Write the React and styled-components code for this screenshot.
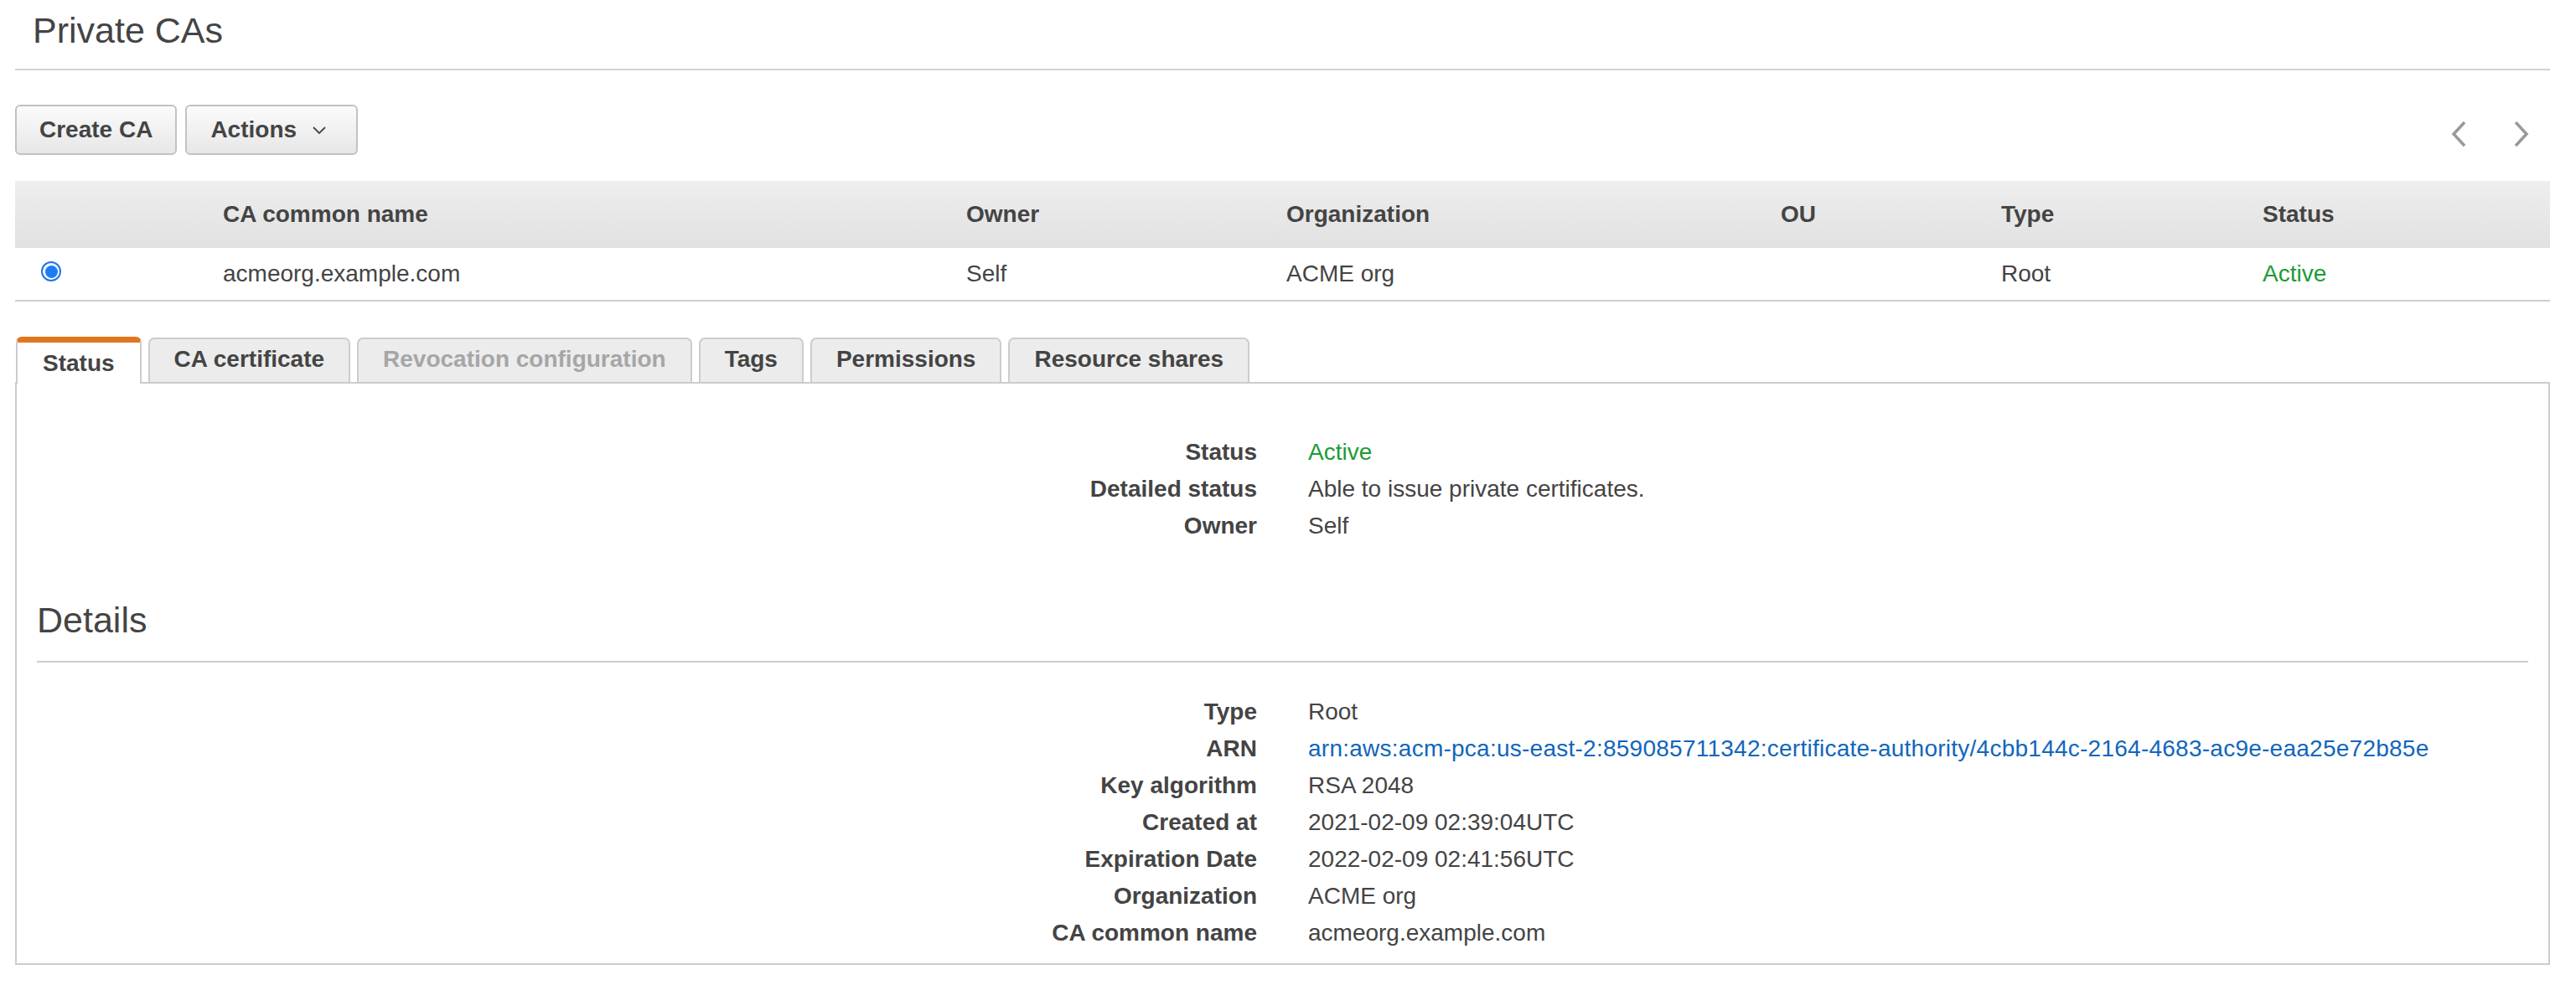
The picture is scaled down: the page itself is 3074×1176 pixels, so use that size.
import styled, { createGlobalStyle, css } from "styled-components"

const GlobalStyle = createGlobalStyle`
  html, body {
    margin: 0;
    padding: 0;
    background: #ffffff;
  }
  body {
    font-family: "Liberation Sans", Arial, Helvetica, sans-serif;
    color: #444444;
    overflow: hidden;
  }
`

const columns = [
  { key: "select", label: "", width: 232 },
  { key: "name", label: "CA common name", width: 887 },
  { key: "owner", label: "Owner", width: 382 },
  { key: "org", label: "Organization", width: 590 },
  { key: "ou", label: "OU", width: 263 },
  { key: "type", label: "Type", width: 312 },
  { key: "status", label: "Status", width: 359 },
]

const tabs = [
  { label: "Status", active: true },
  { label: "CA certificate" },
  { label: "Revocation configuration", disabled: true },
  { label: "Tags" },
  { label: "Permissions" },
  { label: "Resource shares" },
]

const arn =
  "arn:aws:acm-pca:us-east-2:859085711342:certificate-authority/4cbb144c-2164-4683-ac9e-eaa25e72b85e"

const details = [
  { label: "Type", value: "Root" },
  { label: "ARN", value: arn, tone: "link" },
  { label: "Key algorithm", value: "RSA 2048" },
  { label: "Created at", value: "2021-02-09 02:39:04UTC" },
  { label: "Expiration Date", value: "2022-02-09 02:41:56UTC" },
  { label: "Organization", value: "ACME org" },
  { label: "CA common name", value: "acmeorg.example.com" },
]

function Chevron({ dir }) {
  const d = dir === "left" ? "M16 2 L3 16 L16 30" : "M2 2 L15 16 L2 30"
  return (
    <svg width="18" height="32" viewBox="0 0 18 32">
      <path d={d} fill="none" stroke="#999999" strokeWidth="3.5" />
    </svg>
  )
}

export default function App() {
  return (
    <Page>
      <GlobalStyle />
      <TitleBar>
        <h1>Private CAs</h1>
      </TitleBar>

      <Toolbar>
        <ButtonGroup>
          <Button>Create CA</Button>
          <Button $menu>
            Actions
            <svg width="16" height="9" viewBox="0 0 16 9">
              <path d="M1 1 L8 8 L15 1" fill="none" stroke="#444444" strokeWidth="1.8" />
            </svg>
          </Button>
        </ButtonGroup>
        <Pager>
          <Chevron dir="left" />
          <Chevron dir="right" />
        </Pager>
      </Toolbar>

      <Table>
        <colgroup>
          {columns.map((c) => (
            <col key={c.key} style={{ width: c.width }} />
          ))}
        </colgroup>
        <thead>
          <tr>
            {columns.map((c) => (
              <Th key={c.key}>{c.label}</Th>
            ))}
          </tr>
        </thead>
        <tbody>
          <tr>
            <Td $pad={31}>
              <Radio />
            </Td>
            <Td>acmeorg.example.com</Td>
            <Td>Self</Td>
            <Td>ACME org</Td>
            <Td></Td>
            <Td>Root</Td>
            <Td $tone="ok">Active</Td>
          </tr>
        </tbody>
      </Table>

      <TabList>
        {tabs.map((t) => (
          <Tab key={t.label} $active={t.active} $disabled={t.disabled}>
            {t.label}
          </Tab>
        ))}
      </TabList>

      <Panel>
        <KeyValues>
          <Label>Status</Label>
          <Value $tone="ok">Active</Value>
          <Label>Detailed status</Label>
          <Value>Able to issue private certificates.</Value>
          <Label>Owner</Label>
          <Value>Self</Value>
        </KeyValues>

        <Section>
          <SectionTitle>Details</SectionTitle>
          <KeyValues $inset>
            {details.map((d) => (
              <Row key={d.label}>
                <Label>{d.label}</Label>
                <Value $tone={d.tone}>{d.value}</Value>
              </Row>
            ))}
          </KeyValues>
        </Section>
      </Panel>
    </Page>
  )
}

const Page = styled.div`
  padding: 0 31px 0 18px;
  font-size: 28px;
`

const TitleBar = styled.header`
  padding: 10px 0 20px 21px;
  border-bottom: 2px solid #d2d2d2;

  h1 {
    margin: 0;
    font-size: 43px;
    font-weight: 400;
    line-height: 52px;
    color: #444444;
  }
`

const Toolbar = styled.div`
  display: flex;
  justify-content: space-between;
  align-items: center;
  margin-top: 41px;
  height: 60px;
`

const ButtonGroup = styled.div`
  display: flex;
  gap: 10px;
`

const Button = styled.button`
  display: flex;
  align-items: center;
  gap: 19px;
  box-sizing: border-box;
  height: 60px;
  padding: 0 27px;
  border: 2px solid #c2c2c2;
  border-radius: 6px;
  background: linear-gradient(#fbfbfb, #e7e7e7);
  font-family: inherit;
  font-size: 28px;
  font-weight: 700;
  color: #444444;
  cursor: pointer;

  ${({ $menu }) =>
    $menu &&
    css`
      padding: 0 36px 0 28px;
    `}
`

const Pager = styled.div`
  display: flex;
  gap: 57px;
  margin: 10px 25px 0 0;
`

const Table = styled.table`
  width: 100%;
  margin-top: 31px;
  border-collapse: separate;
  border-spacing: 0;
  table-layout: fixed;
`

const Th = styled.th`
  padding: 24px 16px;
  line-height: 32px;
  text-align: left;
  font-size: 28px;
  font-weight: 700;
  color: #444444;
  background: linear-gradient(#eeeeee, #e1e1e1);
`

const Td = styled.td`
  padding: 14px 16px 14px ${({ $pad }) => $pad || 16}px;
  line-height: 32px;
  font-size: 28px;
  color: ${({ $tone }) => ($tone === "ok" ? "#1d9a36" : "#444444")};
  border-bottom: 2px solid #cfcfcf;
`

const Radio = styled.span`
  display: inline-block;
  box-sizing: border-box;
  width: 24px;
  height: 24px;
  margin-bottom: 8px;
  vertical-align: middle;
  border: 2px solid #1a75ef;
  border-radius: 50%;
  padding: 2.5px;
  background: #1c7cf4;
  background-clip: content-box;
`

const TabList = styled.div`
  display: flex;
  align-items: flex-end;
  gap: 8px;
  margin: 42px 0 0 1px;
`

const Tab = styled.div`
  padding: 8px 29px 11px;
  line-height: 32px;
  font-size: 28px;
  font-weight: 700;
  color: ${({ $disabled }) => ($disabled ? "#a6a6a6" : "#444444")};
  background: #ececec;
  border: 2px solid #cccccc;
  border-bottom: 0;
  border-radius: 7px 7px 0 0;

  ${({ $active }) =>
    $active &&
    css`
      position: relative;
      z-index: 1;
      padding: 9px 30px 8px;
      margin-bottom: -2px;
      background: #ffffff;
      border-top: 7px solid #e2761f;
    `}
`

const Panel = styled.div`
  border: 2px solid #cccccc;
  padding: 60px 0 14px;
`

const KeyValues = styled.div`
  display: grid;
  grid-template-columns: 1fr 1fr;
  column-gap: 61px;
  line-height: 44px;
  font-size: 28px;
  margin: ${({ $inset }) => ($inset ? "37px 24px 0" : "0")};
`

const Row = styled.div`
  display: contents;
`

const Label = styled.div`
  text-align: right;
  font-weight: 700;
  color: #444444;
`

const Value = styled.div`
  white-space: nowrap;
  color: ${({ $tone }) =>
    $tone === "ok" ? "#1d9a36" : $tone === "link" ? "#1166bb" : "#444444"};
  letter-spacing: ${({ $tone }) => ($tone === "link" ? "0.25px" : "0")};
`

const Section = styled.section`
  margin-top: 64px;
`

const SectionTitle = styled.h2`
  margin: 0 24px;
  padding-bottom: 23px;
  border-bottom: 2px solid #cccccc;
  font-size: 43px;
  font-weight: 400;
  line-height: 52px;
  color: #444444;
`
